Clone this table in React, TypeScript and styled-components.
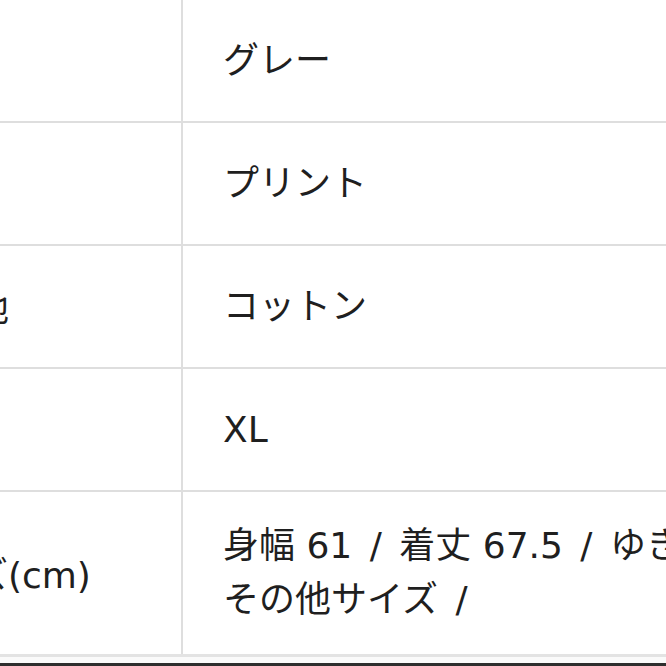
import React from "react";
import styled, { createGlobalStyle } from "styled-components";

const GlobalStyle = createGlobalStyle`
  html, body {
    margin: 0;
    padding: 0;
    background: #ffffff;
    overflow: hidden;
  }
  body {
    font-family: "DejaVu Sans", "Noto Sans CJK JP", sans-serif;
    color: #1f1f1f;
  }
`;

const Page = styled.div`
  width: 666px;
  height: 666px;
  overflow: hidden;
  background: #ffffff;
  display: flex;
  flex-direction: column;
`;

const Table = styled.div`
  display: flex;
  flex-direction: column;
  margin-left: -139px;
  width: 1100px;
`;

const Row = styled.div<{ $last?: boolean }>`
  display: grid;
  grid-template-columns: 322px 1fr;
  min-height: 121px;
  border-bottom: ${(p) => (p.$last ? "3px solid #e3e3e3" : "2px solid #dedede")};
`;

const LabelCell = styled.div`
  display: flex;
  align-items: center;
  padding: 30px 40px 24px;
  border-right: 2px solid #dedede;
  font-size: 36px;
  line-height: 54px;
  white-space: nowrap;
  overflow: hidden;
`;

const ValueCell = styled.div`
  display: flex;
  align-items: center;
  padding: 27px 40px;
  font-size: 36px;
  line-height: 54px;
  white-space: nowrap;
`;

const Sep = styled.span`
  display: inline-block;
  margin: 0 6px;
`;

const Gap = styled.div`
  height: 6px;
  background: #fafafa;
`;

const DarkBar = styled.div`
  height: 3px;
  background: #2e2e2e;
`;

const rows: { label: string; value: React.ReactNode }[] = [
  { label: "色", value: "グレー" },
  { label: "柄", value: "プリント" },
  { label: "表生地", value: "コットン" },
  { label: "表記", value: "XL" },
  {
    label: "サイズ(cm)",
    value: (
      <span>
        身幅 61 <Sep>/</Sep> 着丈 67.5 <Sep>/</Sep> ゆき丈 84
        <br />
        その他サイズ <Sep>/</Sep>
      </span>
    ),
  },
];

export default function App() {
  return (
    <>
      <GlobalStyle />
      <Page>
        <Table>
          {rows.map((r, i) => (
            <Row key={i} $last={i === rows.length - 1}>
              <LabelCell>{r.label}</LabelCell>
              <ValueCell>{r.value}</ValueCell>
            </Row>
          ))}
        </Table>
        <Gap />
        <DarkBar />
      </Page>
    </>
  );
}
